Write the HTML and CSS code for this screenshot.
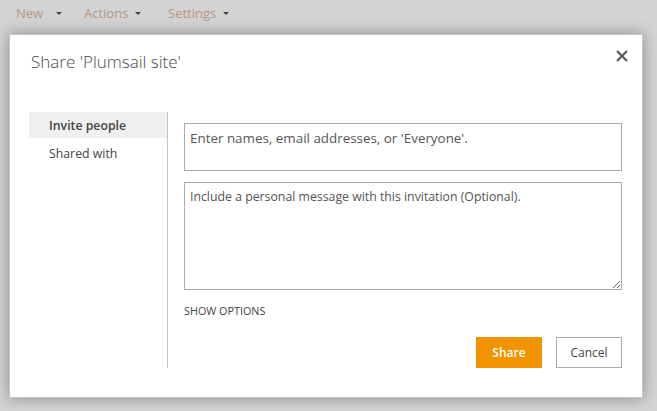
FILE: index.html
```html
<html>
<head>
  <meta name="viewport" content="width=device-width, initial-scale=1.0">
<link rel="stylesheet" href="styles.css">
</head>
<body>

<div class="ribbon">
  <span class="menu-item">New <span class="caret"></span></span>
  <span class="menu-item">Actions <span class="caret"></span></span>
  <span class="menu-item">Settings <span class="caret"></span></span>
</div>

<div class="dialog">
  <div class="dialog-head">
    <h1 class="dialog-title">Share 'Plumsail site'</h1>
    <button class="close-btn" title="Close">
      <svg width="12" height="12" viewBox="0 0 12 12">
        <path d="M1 1 L11 11 M11 1 L1 11" stroke="#555" stroke-width="2" fill="none"/>
      </svg>
    </button>
  </div>

  <div class="dialog-body">
    <div class="side-nav">
      <div class="nav-item active">Invite people</div>
      <div class="nav-item">Shared with</div>
    </div>

    <div class="share-form">
      <input type="text" class="people-box" placeholder="Enter names, email addresses, or 'Everyone'.">
      <textarea class="message-box" placeholder="Include a personal message with this invitation (Optional)."></textarea>
      <a class="show-options">SHOW OPTIONS</a>
      <div class="actions">
        <button class="btn btn-share">Share</button>
        <button class="btn btn-cancel">Cancel</button>
      </div>
    </div>
  </div>
</div>

</body>
</html>
```

FILE: styles.css
```css
body {
  margin: 0;
  background: #d3d3d3;
  font-family: "Open Sans", "Noto Sans", sans-serif;
  color: #444;
  height: 411px;
  overflow: hidden;
}

.ribbon {
  display: flex;
  height: 26px;
  align-items: center;
  padding-left: 16px;
}
.menu-item {
  font-size: 13px;
  color: #b3967f;
  display: flex;
  align-items: center;
}
.menu-item:nth-child(1) { width: 68px; }
.menu-item:nth-child(2) { width: 84px; }
.caret {
  display: inline-block;
  width: 0;
  height: 0;
  margin-left: 7px;
  border-left: 3px solid transparent;
  border-right: 3px solid transparent;
  border-top: 3px solid #444;
}
.menu-item:nth-child(1) .caret { margin-left: 13px; }

.dialog {
  box-sizing: border-box;
  width: 634px;
  height: 364px;
  margin: 8px 0 0 9px;
  background: #fff;
  border: 1px solid #c6c6c6;
  box-shadow: 0 0 14px rgba(0, 0, 0, 0.35);
  padding: 14px 20px 0 19px;
}

.dialog-head {
  display: flex;
  justify-content: space-between;
  align-items: flex-start;
}
.dialog-title {
  margin: 0 0 0 2px;
  font-size: 17px;
  font-weight: 300;
  color: #4a4a4a;
  line-height: 26px;
}
.close-btn {
  border: none;
  background: none;
  padding: 0;
  margin: 0 -7px 0 0;
  width: 14px;
  height: 14px;
  display: flex;
  align-items: center;
  justify-content: center;
}

.dialog-body {
  display: flex;
  margin-top: 37px;
}

.side-nav {
  width: 138px;
  height: 256px;
  border-right: 1px solid #c6c6c6;
}
.nav-item {
  height: 26px;
  line-height: 28px;
  padding-left: 20px;
  font-size: 12.3px;
  color: #444;
  margin-bottom: 2px;
}
.nav-item.active {
  background: #f0f0f0;
  font-weight: 600;
}

.share-form {
  flex: 1;
  padding: 11px 0 0 16px;
  display: flex;
  flex-direction: column;
}
.people-box,
.message-box {
  box-sizing: border-box;
  width: 438px;
  border: 1px solid #ababab;
  font-family: "Open Sans", "Noto Sans", sans-serif;
  color: #444;
  padding: 5px 5px;
  margin: 0;
  outline: none;
}
.people-box {
  height: 48px;
  padding-bottom: 23px;
  font-size: 13.4px;
}
.message-box {
  height: 108px;
  margin-top: 11px;
  resize: vertical;
  font-size: 12.3px;
}
.people-box::placeholder,
.message-box::placeholder {
  color: #555;
}

.show-options {
  font-size: 10.8px;
  color: #444;
  margin-top: 13px;
  line-height: 16px;
}

.actions {
  display: flex;
  justify-content: flex-end;
  gap: 14px;
  margin-top: 18px;
  width: 438px;
}
.btn {
  box-sizing: border-box;
  width: 66px;
  height: 31px;
  font-family: "Open Sans", "Noto Sans", sans-serif;
  font-size: 12px;
  padding: 0;
}
.btn-share {
  background: #f29300;
  border: 1px solid #f29300;
  color: #fff;
  font-weight: 600;
}
.btn-cancel {
  background: #fff;
  border: 1px solid #ababab;
  color: #444;
}
```
